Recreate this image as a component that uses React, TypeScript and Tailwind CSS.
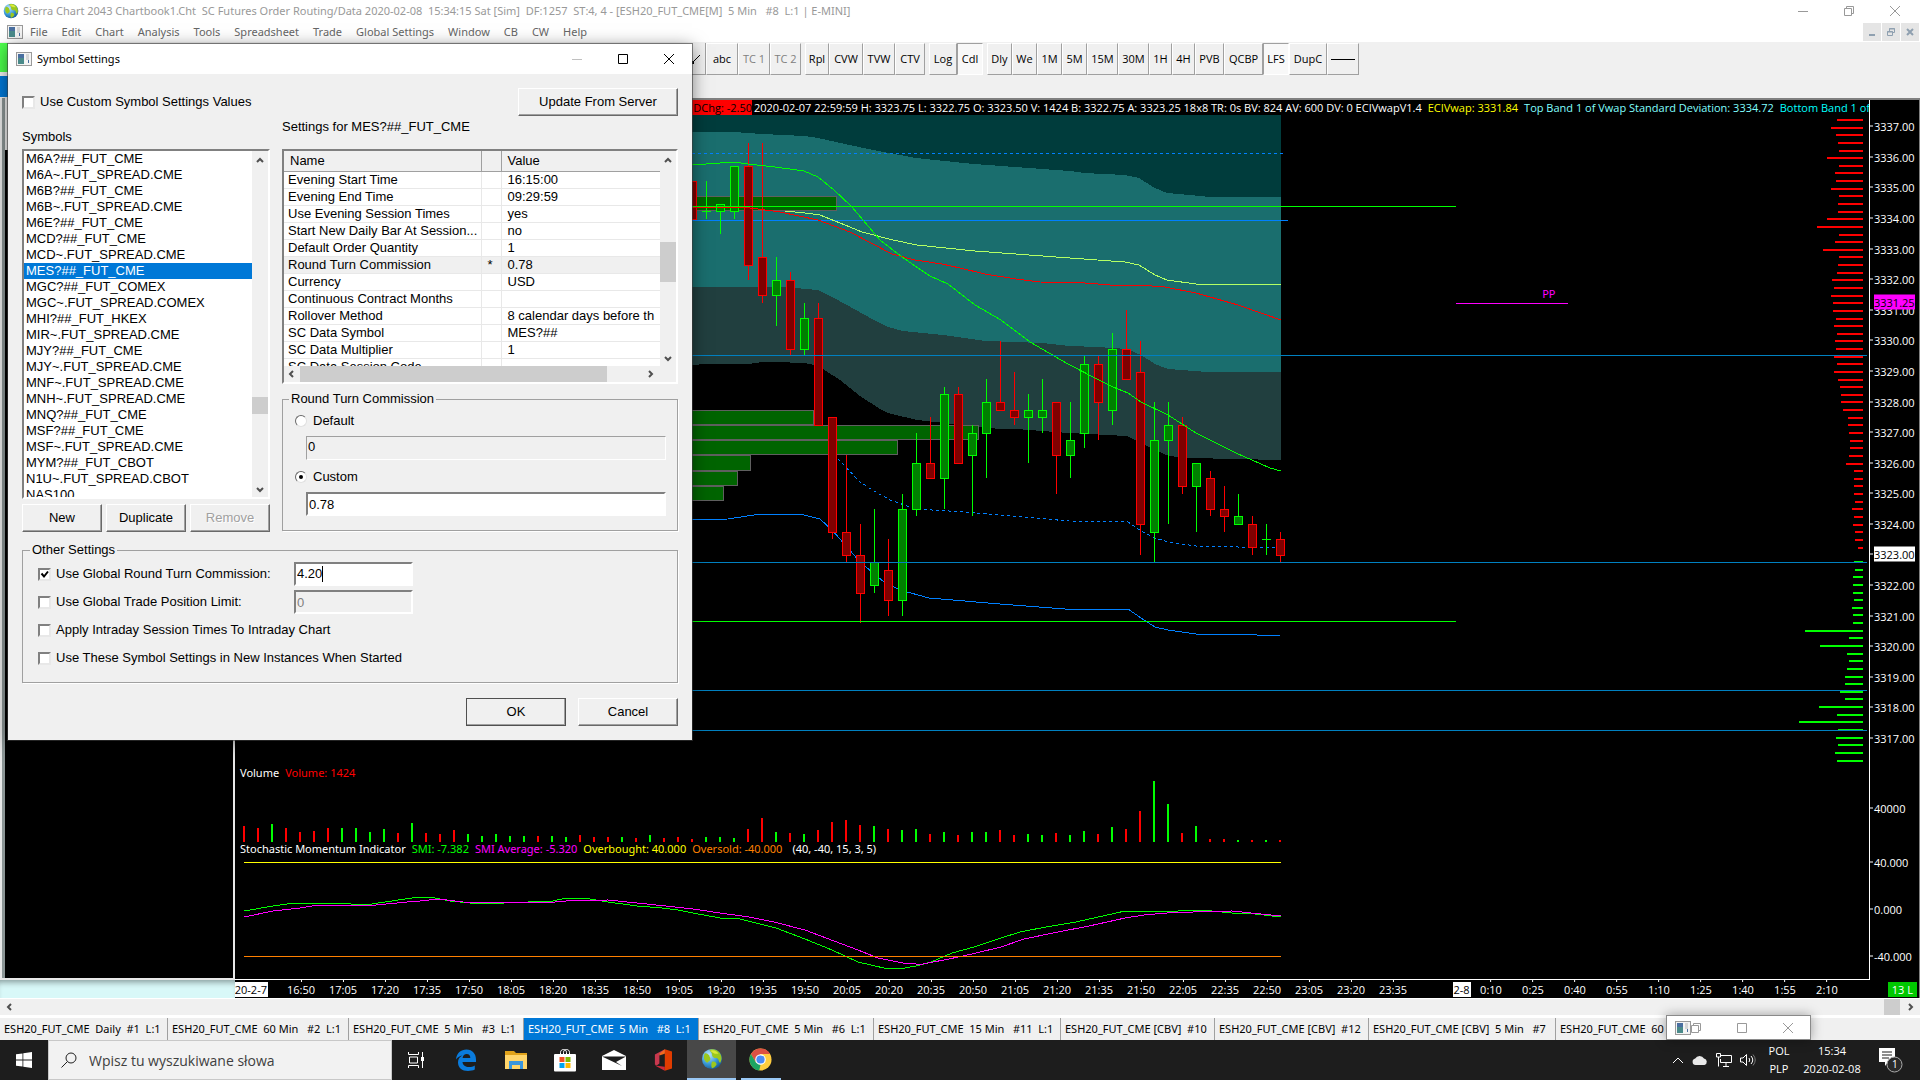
import React from "react";

const UI = "font-['Noto_Sans','Open_Sans',sans-serif]";
const NUM = "font-['Open_Sans','Noto_Sans',sans-serif]";
const DLG = "font-['Liberation_Sans',Arial,sans-serif]";

/* ---------- chart data ---------- */

// bar index, colour, wick top, body top, body bottom, wick bottom
type Candle = [number, "r" | "g", number, number, number, number];
const candles: Candle[] = [
  [32, "r", 181, 181, 219, 219],
  [33, "g", 181, 211, 212, 219],
  [34, "g", 204, 204, 211, 234],
  [35, "g", 166, 166, 211, 219],
  [36, "r", 143, 166, 265, 280],
  [37, "r", 143, 257, 295, 303],
  [38, "g", 257, 280, 295, 326],
  [39, "r", 272, 280, 349, 355],
  [40, "g", 303, 318, 349, 355],
  [41, "r", 303, 318, 425, 425],
  [42, "r", 417, 417, 532, 539],
  [43, "r", 455, 532, 555, 562],
  [44, "r", 524, 555, 593, 623],
  [45, "g", 509, 562, 585, 593],
  [46, "r", 539, 570, 600, 616],
  [47, "g", 494, 509, 600, 616],
  [48, "g", 433, 463, 509, 516],
  [49, "r", 417, 463, 478, 478],
  [50, "g", 387, 394, 478, 509],
  [51, "r", 387, 394, 463, 463],
  [52, "g", 425, 433, 455, 516],
  [53, "g", 379, 402, 433, 478],
  [54, "r", 341, 402, 410, 410],
  [55, "r", 372, 410, 417, 425],
  [56, "g", 394, 410, 417, 463],
  [57, "g", 379, 410, 417, 433],
  [58, "r", 402, 402, 455, 494],
  [59, "g", 402, 440, 455, 478],
  [60, "g", 356, 364, 433, 448],
  [61, "r", 356, 364, 402, 440],
  [62, "g", 333, 349, 410, 425],
  [63, "r", 310, 349, 379, 379],
  [64, "r", 341, 372, 524, 555],
  [65, "g", 402, 440, 532, 562],
  [66, "g", 402, 425, 440, 524],
  [67, "r", 417, 425, 486, 494],
  [68, "g", 463, 463, 486, 532],
  [69, "r", 471, 478, 509, 516],
  [70, "r", 486, 509, 516, 532],
  [71, "g", 494, 516, 524, 524],
  [72, "r", 516, 524, 547, 555],
  [73, "g", 524, 539, 540, 555],
  [74, "r", 532, 539, 555, 562],
];

const volumes =
  "16R 14R 18G 14R 10R 11R 14R 14G 14G 10G 13G 9R 19G 9R 8R 12R 8G 6G 8G 6G 6G 6R 6G 5G 7R 5R 5R 5G 4R 7G 4R 5R 3R 5G 5G 4G 13R 24R 10G 9R 8G 12R 20R 22R 17R 16G 13R 12G 13G 8R 10G 7R 10G 10G 12R 7R 8G 7G 9R 7G 11G 8R 15G 13R 31R 61G 38G 9R 16G 3R 3R 2G 2R 2G 2R".split(
    " "
  );

const asks = [
  26, 32, 27, 25, 24, 36, 24, 28, 27, 32, 24, 25, 25, 36, 46, 24, 28, 40, 24, 25, 26, 31, 29, 32, 30, 30, 27, 29, 26,
  28, 27, 29, 26, 29, 25, 23, 22, 22, 20, 15, 15, 14, 13, 13, 14, 17, 9, 9, 9, 9, 8, 11, 9, 10, 8, 8, 5,
];
const bids = [
  9, 8, 10, 10, 10, 9, 11, 10, 10, 58, 14, 43, 16, 14, 16, 18, 18, 23, 18, 44, 26, 64, 25, 27, 25, 28, 26,
];

const priceY = (p: number) => 126.3 + (3337 - p) * 30.54;
const barX = (k: number) => 244 + 14 * k;

const profile: [number, number, number][] = [
  [196, 211, 836],
  [410, 425, 813],
  [425, 440, 978],
  [440, 455, 897],
  [455, 471, 750],
  [471, 486, 737],
  [486, 501, 723],
];

const bandTop =
  "692,132 734,132 762,134 804,136 818,138 845,144 873,150 900,155 916,158 974,164 1070,171 1084,173 1125,175 1139,178 1153,187 1167,193 1190,195 1210,197 1281,197";
const bandMid =
  "692,287 748,287 776,287 795,288 818,290 834,298 856,310 874,320 888,327 903,331 943,335 986,341 1042,343 1070,346 1097,347 1127,349 1141,355 1155,364 1168,369 1208,372 1281,372";
const bandLow =
  "692,365 706,364 748,364 762,362 775,362 804,363 815,365 823,369 840,380 860,396 880,409 888,413 917,420 945,423 978,427 1000,429 1016,429 1069,433 1127,436 1141,443 1155,450 1169,456 1190,458 1281,460";

const greenMA =
  "692,165 720,163 734,162 748,164 775,167 804,171 818,177 834,190 852,207 880,240 902,257 918,268 930,276 948,284 975,305 1001,320 1030,342 1068,364 1097,379 1113,387 1128,393 1141,402 1168,415 1196,433 1236,453 1270,468 1281,471";
const vwap =
  "785,211 805,213 820,215 845,225 862,232 893,240 917,245 975,251 1056,257 1125,262 1139,265 1155,275 1167,280 1196,284 1259,284 1281,285";
const redMA =
  "692,207 716,207 750,208 780,212 818,220 850,232 892,254 915,260 942,264 960,268 985,274 1016,279 1040,282 1085,283 1110,285 1139,285 1165,287 1196,293 1238,305 1281,320";
const blueSolid =
  "692,520 728,519 760,514 800,514 820,519 833,531 860,562 884,582 900,590 929,598 1000,604 1065,609 1128,609 1141,618 1155,627 1168,630 1196,634 1233,634 1280,636";
const blueDash =
  "838,459 860,482 874,491 890,500 916,509 965,512 1069,521 1128,522 1141,531 1155,538 1168,542 1196,546 1280,548";
const smi =
  "244,911 273,906 294,903 336,903 365,905 385,902 412,898 430,897 450,901 470,903 504,903 553,901 566,898 584,898 608,902 637,906 662,908 678,910 693,913 720,918 740,919 776,928 805,939 832,950 858,962 888,969 905,968 916,966 931,962 952,953 974,947 1001,938 1020,932 1046,927 1076,922 1125,911 1144,911 1154,912 1202,910 1232,913 1255,914 1281,917";
const smiAvg =
  "244,917 273,911 300,908 318,905 376,905 407,902 420,901 439,899 463,902 506,903 532,902 555,902 566,901 608,900 637,903 666,906 693,909 720,913 749,917 774,922 805,930 834,941 858,950 878,958 903,963 916,964 923,964 949,959 972,954 1001,947 1024,939 1053,933 1089,926 1125,918 1144,915 1167,913 1193,912 1232,911 1261,914 1281,916";

const timeLabels: [string, number][] = [
  ...[
    "16:50", "17:05", "17:20", "17:35", "17:50", "18:05", "18:20", "18:35", "18:50", "19:05", "19:20", "19:35",
    "19:50", "20:05", "20:20", "20:35", "20:50", "21:05", "21:20", "21:35", "21:50", "22:05", "22:35", "22:50",
    "23:05", "23:20", "23:35",
  ].map((t, i): [string, number] => [t, 301 + i * 42]),
  ...["0:10", "0:25", "0:40", "0:55", "1:10", "1:25", "1:40", "1:55", "2:10"].map(
    (t, i): [string, number] => [t, 1491 + i * 42]
  ),
];

const axisLabels: [string, number][] = [
  ...Array.from({ length: 21 }, (_, i): [string, number] => [`${3337 - i}.00`, priceY(3337 - i)]),
  ["40000", 807],
  ["40.000", 861],
  ["0.000", 908],
  ["-40.000", 955],
];

/* ---------- chart ---------- */

function Plot() {
  return (
    <svg
      className="absolute inset-0 h-full w-full"
      viewBox="235 100 1634 879"
      preserveAspectRatio="none"
      shapeRendering="crispEdges"
      fill="none"
    >
      <rect x="235" y="115" width="1046" height="100" fill="#003c3c" />
      <polygon points={`${bandTop} 1281,380 692,380`} fill="#1a6e6e" />
      <polygon points={`${bandMid} 1281,480 692,480`} fill="#213f3f" />
      <polygon points={`${bandLow} 1281,520 692,520`} fill="#000" />
      {profile.map(([y1, y2, x]) => (
        <rect key={y1} x="600.5" y={y1 + 0.5} width={x - 600} height={y2 - y1 - 1} fill="#006400" stroke="#5f5f5f" />
      ))}
      <path d="M692 153.5H1285" stroke="#0080ff" strokeDasharray="3 3" />
      <path d="M692 220.5H1288" stroke="#0080ff" />
      <polyline points={blueDash} stroke="#0080ff" strokeDasharray="3 3" />
      <polyline points={blueSolid} stroke="#0080ff" />
      {candles.map(([k, c, wt, bt, bb, wb]) => {
        const x = barX(k);
        const line = c === "r" ? "#ff0000" : "#00ff00";
        const fill = c === "r" ? "#800000" : "#008000";
        return (
          <g key={k}>
            <rect x={x} y={wt} width="1" height={wb - wt} fill={line} />
            {bb - bt <= 1 ? (
              <rect x={x - 4} y={bt} width="9" height="1" fill={line} />
            ) : (
              <rect x={x - 3.5} y={bt + 0.5} width="8" height={bb - bt} fill={fill} stroke={line} />
            )}
          </g>
        );
      })}
      <polyline points={vwap} stroke="#b4ff64" />
      <polyline points={redMA} stroke="#ff0000" />
      <polyline points={greenMA} stroke="#00ff00" />
      {asks.map((w, i) => (
        <rect key={i} x={1863 - w} y={Math.round(119 + i * 7.635)} width={w} height="2" fill="#ff0000" />
      ))}
      {bids.map((w, i) => (
        <rect key={i} x={1863 - w} y={Math.round(561 + i * 7.635)} width={w} height="2" fill="#00ff00" />
      ))}
      {[355, 562, 690, 730].map((y) => (
        <rect key={y} x="235" y={y} width="1632" height="1" fill="#0080c0" />
      ))}
      {[206, 621].map((y) => (
        <rect key={y} x="235" y={y} width="1221" height="1" fill="#00ff00" />
      ))}
      <rect x="1456" y="303" width="112" height="1" fill="#ff00ff" />
      {volumes.map((v, k) => {
        const h = parseInt(v, 10);
        return (
          <rect
            key={k}
            x={barX(k) - 1}
            y={842 - h}
            width="2"
            height={h}
            fill={v.endsWith("R") ? "#ff0000" : "#00ff00"}
          />
        );
      })}
      <rect x="244" y="862" width="1037" height="1" fill="#ffff00" />
      <polyline points={smi} stroke="#00ff00" />
      <polyline points={smiAvg} stroke="#ff00ff" />
      <rect x="244" y="956" width="1037" height="1" fill="#ff8000" />
    </svg>
  );
}

function ChartWindow() {
  return (
    <section className={`flex min-w-0 flex-1 flex-col border-t-2 border-r border-[#808080] bg-black text-[11px] leading-[15px] text-white ${UI}`}>
      <div className="flex flex-1">
        <div className="relative flex-1 overflow-hidden border-r border-b border-white">
          <Plot />
          <div className={`absolute top-0 right-0 left-0 flex overflow-hidden whitespace-pre ${NUM}`}>
            <div className="w-[517px] shrink-0 bg-[#ff0000] text-right text-black">DChg: -2.50</div>
            <span className="pl-0.5">
              2020-02-07 22:59:59 H: 3323.75 L: 3322.75 O: 3323.50 V: 1424 B: 3322.75 A: 3323.25 18x8 TR: 0s BV: 824 AV: 600
              DV: 0 ECIVwapV1.4
            </span>
            <span className="pl-1.5 text-[#ffff00]">ECIVwap: 3331.84</span>
            <span className="pl-1.5 text-[#80ffff]">Top Band 1 of Vwap Standard Deviation: 3334.72</span>
            <span className="pl-1.5 text-[#00ffff]">Bottom Band 1 of</span>
          </div>
          <span className="absolute top-[21.2%] left-[80%] text-[#ff00ff]">PP</span>
          <div className="absolute top-[75.7%] left-[5px] flex gap-1.5">
            <span>Volume</span>
            <span className="text-[#ff0000]">Volume: 1424</span>
          </div>
          <div className="absolute top-[84.3%] left-[5px] flex gap-1.5">
            <span>Stochastic Momentum Indicator</span>
            <span className="text-[#00ff00]">SMI: -7.382</span>
            <span className="text-[#ff00ff]">SMI Average: -5.320</span>
            <span className="text-[#ffff00]">Overbought: 40.000</span>
            <span className="text-[#ff8000]">Oversold: -40.000</span>
            <span className="pl-1">(40, -40, 15, 3, 5)</span>
          </div>
        </div>
        <div className={`relative w-[49px] ${NUM}`}>
          {axisLabels.map(([t, y]) => (
            <div
              key={t}
              className="absolute left-0 flex -translate-y-1/2 items-center gap-px"
              style={{ top: `${((y - 100) / 879) * 100}%` }}
            >
              <span className="h-px w-[3px] bg-white" />
              <span className={t === "3323.00" ? "bg-white text-black" : ""}>{t}</span>
            </div>
          ))}
          <span className="absolute top-[23%] left-1 -translate-y-1/2 bg-[#ff00ff] text-black">3331.25</span>
        </div>
      </div>
      <div className={`relative h-[18px] overflow-hidden ${NUM}`}>
        <span className="absolute top-0.5 left-0 flex w-[33px] justify-end overflow-hidden bg-white pr-px whitespace-nowrap text-black">
          20-2-7
        </span>
        {timeLabels.map(([t, x]) => (
          <div
            key={t}
            className="absolute top-0 flex -translate-x-1/2 flex-col items-center"
            style={{ left: `${((x - 235) / 1684) * 100}%` }}
          >
            <span className="h-[2px] w-px bg-white" />
            <span>{t}</span>
          </div>
        ))}
        <span className="absolute top-0.5 left-[72.3%] bg-white px-px text-black">2-8</span>
        <span className="absolute top-0.5 right-0.5 bg-[#00c800] px-1">13 L</span>
      </div>
    </section>
  );
}

/* ---------- main window chrome ---------- */

function AppIcon() {
  return (
    <svg viewBox="0 0 16 16" className="h-4 w-4 shrink-0">
      <rect x="0.5" y="1.5" width="15" height="13" fill="#f4f4f4" stroke="#9a9a9a" />
      <rect x="2" y="3" width="6" height="10" fill="#4a8a8a" />
      <rect x="2" y="3" width="6" height="4" fill="#4a6fa0" />
      <path d="M10 4h3M10 6h3M10 8h3" stroke="#b8b8b8" />
      <rect x="12" y="9" width="1" height="3" fill="#4a6fa0" />
    </svg>
  );
}

function Globe({ className }: { className: string }) {
  return (
    <svg viewBox="0 0 24 24" className={className}>
      <defs>
        <radialGradient id="globe" cx="0.35" cy="0.3" r="0.8">
          <stop offset="0" stopColor="#bfe6ff" />
          <stop offset="0.55" stopColor="#3a9bd8" />
          <stop offset="1" stopColor="#12508a" />
        </radialGradient>
      </defs>
      <circle cx="12" cy="12" r="11" fill="url(#globe)" />
      <path d="M9 2c3-1 8-1 11 3 3 4 3 8 1 11-2 0-1-4-4-5-3 0-5-1-5-4 0-2-2-3-3-5zM4 6c2-1 4 1 5 2 0 2 2 3 1 5-1 2-2 1-3 3C4 15 2 11 4 6zM12 15c3-1 5 1 5 3-1 2-3 4-5 4-1-2-1-5 0-7z" fill="#9bc81e" />
      <path d="M10 3c4-2 8 1 9 3-3 1-6 0-9-3z" fill="#d8e83c" />
    </svg>
  );
}

const menus = ["File", "Edit", "Chart", "Analysis", "Tools", "Spreadsheet", "Trade", "Global Settings", "Window", "CB", "CW", "Help"];

function Header() {
  return (
    <header className={`bg-white ${UI}`}>
      <div className="flex h-[22px] items-center pl-[3px]">
        <Globe className="h-4 w-4" />
        <h1 className="pl-1 text-[11px] whitespace-pre text-[#999]">
          {"Sierra Chart 2043 Chartbook1.Cht  SC Futures Order Routing/Data 2020-02-08  15:34:15 Sat [Sim]  DF:1257  ST:4, 4 - [ESH20_FUT_CME[M]  5 Min   #8  L:1 | E-MINI]"}
        </h1>
        <div className="ml-auto flex gap-9 pr-5">
          <button aria-label="Minimise">
            <svg className="h-[10px] w-[10px]" viewBox="0 0 10 10"><path d="M0 5.5h10" stroke="#999" /></svg>
          </button>
          <button aria-label="Restore">
            <svg className="h-[10px] w-[10px]" viewBox="0 0 10 10" fill="none" stroke="#999"><path d="M.5 2.500h7v7h-7zM2.500 2.500v-2h7v7h-2" /></svg>
          </button>
          <button aria-label="Close">
            <svg className="h-[10px] w-[10px]" viewBox="0 0 10 10"><path d="M0 0l10 10M10 0L0 10" stroke="#999" /></svg>
          </button>
        </div>
      </div>
      <nav className="flex h-5 items-center pl-[7px]">
        <AppIcon />
        <div className="flex gap-3.5 pl-[7px] text-[11px] text-[#666]">
          {menus.map((m) => (
            <button key={m} className="whitespace-nowrap">{m}</button>
          ))}
        </div>
        <div className="ml-auto flex gap-px pr-px text-[#8fa0b0]">
          <button aria-label="Minimise chart" className="flex h-[18px] w-[18px] items-center justify-center bg-[#e5e5e5]">
            <svg className="h-2.5 w-2.5" viewBox="0 0 10 10"><path d="M2 7h6v2H2z" fill="currentColor" /></svg>
          </button>
          <button aria-label="Restore chart" className="flex h-[18px] w-[18px] items-center justify-center bg-[#e5e5e5]">
            <svg className="h-2.5 w-2.5" viewBox="0 0 10 10" fill="none" stroke="currentColor"><path d="M1.500 4.500h5v4h-5zM1 5h6M3.500 4V1.500h5v4H7M3 2h6" /></svg>
          </button>
          <button aria-label="Close chart" className="flex h-[18px] w-[18px] items-center justify-center bg-[#e5e5e5]">
            <svg className="h-2.5 w-2.5" viewBox="0 0 10 10"><path d="M2 2l6 6M8 2L2 8" stroke="currentColor" strokeWidth="2" /></svg>
          </button>
        </div>
      </nav>
    </header>
  );
}

type Tool = { t: string; c: string };
const toolGroups: Tool[][] = [
  [{ t: "abc", c: "w-8" }, { t: "TC 1", c: "w-8 text-[#808080]" }, { t: "TC 2", c: "w-[31px] text-[#808080]" }],
  [{ t: "Rpl", c: "w-6" }, { t: "CVW", c: "w-[34px]" }, { t: "TVW", c: "w-8" }, { t: "CTV", c: "w-[30px]" }],
  [{ t: "Log", c: "w-7" }, { t: "Cdl", c: "w-[26px]" }],
  [
    { t: "Dly", c: "w-[25px]" },
    { t: "We", c: "w-[25px]" },
    { t: "1M", c: "w-[25px]" },
    { t: "5M", c: "w-[25px]" },
    { t: "15M", c: "w-[31px]" },
    { t: "30M", c: "w-[31px]" },
    { t: "1H", c: "w-[23px]" },
    { t: "4H", c: "w-[23px]" },
    { t: "PVB", c: "w-[29px]" },
    { t: "QCBP", c: "w-[39px]" },
    { t: "LFS", c: "w-[26px]" },
    { t: "DupC", c: "w-[38px]" },
    { t: "line", c: "w-8" },
  ],
];

function Toolbar() {
  return (
    <div className={`flex h-[56px] items-start bg-[#f0f0f0] pt-px text-[11px] ${NUM}`}>
      <div className="flex w-2 flex-col gap-1">
        <div className="h-[29px] bg-[#4cff4c]" />
        <div className="h-[21px] bg-[#0078d7]" />
      </div>
      <div className="flex gap-1 pl-[671px]">
        <button aria-label="Draw line" className="-mr-1 flex h-8 w-[27px] items-center justify-end border-r border-b border-[#a0a0a0] pr-1">
          <svg viewBox="0 0 10 10" className="h-2.5 w-2.5"><path d="M1 9L9 1" stroke="#000" /><rect y="7" width="3" height="3" fill="#000" /></svg>
        </button>
        {toolGroups.map((g, i) => (
          <div key={i} className="flex">
            {g.map(({ t, c }) => (
              <button
                key={t}
                className={`flex h-8 items-center justify-center overflow-hidden border whitespace-nowrap ${c} ${
                  t === "Cdl" || t === "LFS"
                    ? "border-t-[#a0a0a0] border-r-white border-b-white border-l-[#a0a0a0] bg-[#f8f8f8]"
                    : "border-t-white border-r-[#a0a0a0] border-b-[#a0a0a0] border-l-white"
                }`}
                aria-label={t}
              >
                {t === "line" ? <span className="h-px w-6 bg-black" /> : t}
              </button>
            ))}
          </div>
        ))}
      </div>
    </div>
  );
}

const tabs = [
  ["ESH20_FUT_CME  Daily  #1  L:1", "w-[168px]"],
  ["ESH20_FUT_CME  60 Min   #2  L:1", "w-[181px]"],
  ["ESH20_FUT_CME  5 Min   #3  L:1", "w-[175px]"],
  ["ESH20_FUT_CME  5 Min   #8  L:1", "w-[175px]"],
  ["ESH20_FUT_CME  5 Min   #6  L:1", "w-[175px]"],
  ["ESH20_FUT_CME  15 Min   #11  L:1", "w-[187px]"],
  ["ESH20_FUT_CME [CBV]  #10", "w-[154px]"],
  ["ESH20_FUT_CME [CBV]  #12", "w-[154px]"],
  ["ESH20_FUT_CME [CBV]  5 Min   #7", "w-[187px]"],
  ["ESH20_FUT_CME  60", "w-[170px]"],
];

function Tabs() {
  return (
    <div className={`relative flex h-[24px] overflow-visible border-t-2 border-white bg-[#f0f0f0] ${UI}`}>
      <div className="flex flex-1 overflow-hidden">
        {tabs.map(([t, w]) => (
          <button
            key={t}
            className={`shrink-0 overflow-hidden border-r border-[#a0a0a0] pl-1 text-left text-[11px] leading-5 whitespace-pre ${w} ${
              t.includes("#8") ? "bg-[#0078d7] text-white" : ""
            }`}
          >
            {t}
          </button>
        ))}
      </div>
      <div className="absolute right-[109px] bottom-0 flex h-[25px] w-[145px] items-center border border-[#8a8a8a] bg-white pl-2 shadow-[0_0_12px_rgba(0,0,0,0.35)]">
        <AppIcon />
        <div className="flex flex-1 justify-between pr-[17px]">
          <button aria-label="Restore small window">
            <svg className="h-2.5 w-2.5" viewBox="0 0 10 10" fill="none" stroke="#999"><path d="M.5 2.500h7v7h-7zM2.500 2.500v-2h7v7h-2" /></svg>
          </button>
          <button aria-label="Maximise small window">
            <svg className="h-2.5 w-2.5" viewBox="0 0 10 10" fill="none" stroke="#999"><path d="M.5.5h9v9h-9z" /></svg>
          </button>
          <button aria-label="Close small window">
            <svg className="h-2.5 w-2.5" viewBox="0 0 10 10"><path d="M0 0l10 10M10 0L0 10" stroke="#999" /></svg>
          </button>
        </div>
      </div>
    </div>
  );
}

/* ---------- dialog ---------- */

const symbols = [
  "M6A?##_FUT_CME", "M6A~.FUT_SPREAD.CME", "M6B?##_FUT_CME", "M6B~.FUT_SPREAD.CME", "M6E?##_FUT_CME",
  "MCD?##_FUT_CME", "MCD~.FUT_SPREAD.CME", "MES?##_FUT_CME", "MGC?##_FUT_COMEX", "MGC~.FUT_SPREAD.COMEX",
  "MHI?##_FUT_HKEX", "MIR~.FUT_SPREAD.CME", "MJY?##_FUT_CME", "MJY~.FUT_SPREAD.CME", "MNF~.FUT_SPREAD.CME",
  "MNH~.FUT_SPREAD.CME", "MNQ?##_FUT_CME", "MSF?##_FUT_CME", "MSF~.FUT_SPREAD.CME", "MYM?##_FUT_CBOT",
  "N1U~.FUT_SPREAD.CBOT", "NAS100",
];

const rows: [string, string, string][] = [
  ["Evening Start Time", "", "16:15:00"],
  ["Evening End Time", "", "09:29:59"],
  ["Use Evening Session Times", "", "yes"],
  ["Start New Daily Bar At Session...", "", "no"],
  ["Default Order Quantity", "", "1"],
  ["Round Turn Commission", "*", "0.78"],
  ["Currency", "", "USD"],
  ["Continuous Contract Months", "", ""],
  ["Rollover Method", "", "8 calendar days before th"],
  ["SC Data Symbol", "", "MES?##"],
  ["SC Data Multiplier", "", "1"],
  ["SC Data Session Code", "", ""],
];

function Arrow({ d }: { d: "up" | "down" | "left" | "right" }) {
  const p = { up: "M1 6l3-3 3 3", down: "M1 2l3 3 3-3", left: "M5 1L2 4l3 3", right: "M3 1l3 3-3 3" }[d];
  return (
    <svg viewBox="0 0 8 8" className="h-2 w-2" fill="none" stroke="#505050" strokeWidth="2">
      <path d={p} />
    </svg>
  );
}

function VScroll({ thumb, gap }: { thumb: string; gap: string }) {
  return (
    <div className="flex w-4 shrink-0 flex-col items-center bg-[#f0f0f0] pt-[5px] pb-[3px]">
      <Arrow d="up" />
      <div className={`w-full bg-[#cdcdcd] ${thumb} ${gap}`} />
      <div className="flex-1" />
      <Arrow d="down" />
    </div>
  );
}

const sunken = "border-2 border-t-[#808080] border-l-[#808080] border-r-white border-b-white";

function Btn({ children, className, disabled }: { children: string; className: string; disabled?: boolean }) {
  return (
    <button
      disabled={disabled}
      className={`h-7 border border-t-white border-r-[#696969] border-b-[#696969] border-l-white bg-[#f0f0f0] shadow-[inset_-1px_-1px_0_#a0a0a0] disabled:text-[#a0a0a0] disabled:[text-shadow:1px_1px_0_#fff] ${className}`}
    >
      {children}
    </button>
  );
}

function Check({ id, label, checked }: { id: string; label: string; checked?: boolean }) {
  return (
    <div className="flex items-center gap-[5px]">
      <span className="relative flex">
        <input
          id={id}
          type="checkbox"
          defaultChecked={checked}
          className="peer h-[13px] w-[13px] appearance-none border-2 border-t-[#808080] border-r-[#e8e8e8] border-b-[#e8e8e8] border-l-[#808080] bg-white"
        />
        <svg viewBox="0 0 13 13" className="pointer-events-none absolute inset-0 hidden peer-checked:block">
          <path d="M3.500 5.500l2.500 3 4-5" fill="none" stroke="#000" strokeWidth="2" />
        </svg>
      </span>
      <label htmlFor={id}>{label}</label>
    </div>
  );
}

function Radio({ id, label, checked }: { id: string; label: string; checked?: boolean }) {
  return (
    <div className="flex h-4 items-center gap-1.5">
      <span className="relative flex">
        <input
          id={id}
          name="commission"
          type="radio"
          defaultChecked={checked}
          className="peer h-3 w-3 appearance-none rounded-full border border-t-[#696969] border-r-[#e0e0e0] border-b-[#e0e0e0] border-l-[#696969] bg-white"
        />
        <span className="pointer-events-none absolute top-1 left-1 hidden h-1 w-1 rounded-full bg-black peer-checked:block" />
      </span>
      <label htmlFor={id}>{label}</label>
    </div>
  );
}

function Dialog() {
  return (
    <div
      role="dialog"
      aria-label="Symbol Settings"
      className={`absolute top-[44px] left-2 flex w-[684px] flex-col bg-[#f0f0f0] text-[13px] leading-4 text-black shadow-[0_0_0_1px_rgba(60,60,60,0.6),0_3px_16px_rgba(0,0,0,0.5)] ${DLG}`}
    >
      <div className={`flex h-[30px] items-center bg-white pl-2 text-[11px] ${UI}`}>
        <AppIcon />
        <h2 className="pl-[5px]">Symbol Settings</h2>
        <div className="ml-auto flex gap-9 pr-[18px]">
          <button aria-label="Minimise dialog" disabled>
            <svg className="h-2.5 w-2.5" viewBox="0 0 10 10"><path d="M0 5.5h10" stroke="#c0c0c0" /></svg>
          </button>
          <button aria-label="Maximise dialog">
            <svg className="h-2.5 w-2.5" viewBox="0 0 10 10" fill="none" stroke="#000"><path d="M.5.5h9v9h-9z" /></svg>
          </button>
          <button aria-label="Close dialog">
            <svg className="h-2.5 w-2.5" viewBox="0 0 10 10"><path d="M0 0l10 10M10 0L0 10" stroke="#000" /></svg>
          </button>
        </div>
      </div>

      <div className="flex flex-col px-3.5 pt-3.5 pb-3.5">
        <div className="flex items-center justify-between">
          <Check id="custom-values" label="Use Custom Symbol Settings Values" />
          <Btn className="w-40">Update From Server</Btn>
        </div>

        <div className="flex gap-3">
          <div className="flex w-[248px] flex-col pt-[13px]">
            <span id="symbols-label" className="pb-1">Symbols</span>
            <div className={`flex h-[350px] bg-white ${sunken}`}>
              <ul role="listbox" aria-labelledby="symbols-label" className="flex-1 overflow-hidden">
                {symbols.map((s) => (
                  <li
                    key={s}
                    role="option"
                    aria-selected={s.startsWith("MES")}
                    className={`pl-0.5 ${s.startsWith("MES") ? "bg-[#0078d7] text-white" : ""}`}
                  >
                    {s}
                  </li>
                ))}
              </ul>
              <VScroll thumb="h-[17px]" gap="mt-[233px]" />
            </div>
            <div className="flex gap-1 pt-[5px]">
              <Btn className="flex-1">New</Btn>
              <Btn className="flex-1">Duplicate</Btn>
              <Btn className="flex-1" disabled>Remove</Btn>
            </div>
          </div>

          <div className="flex min-w-0 flex-1 flex-col pt-[3px]">
            <span className="pb-3.5">Settings for MES?##_FUT_CME</span>
            <div className={`flex h-[235px] flex-col bg-white ${sunken}`}>
              <div className="flex min-h-0 flex-1">
                <div className="min-w-0 flex-1 overflow-hidden">
                  <table className="w-full table-fixed border-collapse">
                    <colgroup>
                      <col className="w-[197px]" />
                      <col className="w-5" />
                      <col />
                    </colgroup>
                    <thead>
                      <tr className="h-[20px] bg-[#f0f0f0] text-left">
                        <th className="border-r border-b border-[#a0a0a0] pl-1.5 font-normal">Name</th>
                        <th className="border-r border-b border-[#a0a0a0]" aria-label="Changed" />
                        <th className="border-b border-[#a0a0a0] pl-1.5 font-normal">Value</th>
                      </tr>
                    </thead>
                    <tbody>
                      {rows.map(([n, m, v]) => (
                        <tr key={n} className={`h-[17px] ${m ? "bg-[#f0f0f0]" : ""}`}>
                          <td className="border-r border-b border-[#e8e8e8] pl-1 whitespace-nowrap">{n}</td>
                          <td className="border-r border-b border-[#e8e8e8] pl-1.5">{m}</td>
                          <td className="border-b border-[#e8e8e8] pl-1.5 whitespace-nowrap">{v}</td>
                        </tr>
                      ))}
                    </tbody>
                  </table>
                </div>
                <VScroll thumb="h-10" gap="mt-[78px]" />
              </div>
              <div className="flex h-4 items-center gap-1 bg-[#f0f0f0] pr-[18px] pl-1">
                <Arrow d="left" />
                <div className="h-full w-[307px] bg-[#cdcdcd]" />
                <div className="ml-auto pr-1"><Arrow d="right" /></div>
              </div>
            </div>

            <fieldset className="mt-[7px] flex h-[140px] flex-col border border-[#a0a0a0] px-3 shadow-[1px_1px_0_#fff]">
              <legend className="-ml-1.5 px-0.5">Round Turn Commission</legend>
              <div className="flex flex-col pt-1.5">
                <Radio id="default" label="Default" />
                <input aria-label="Default commission" readOnly defaultValue="0" className="mt-[7px] mr-[-1px] ml-[11px] h-6 border border-t-[#a0a0a0] border-r-white border-b-white border-l-[#a0a0a0] bg-[#f0f0f0] px-px pb-1" />
                <div className="pt-[9px]"><Radio id="custom" label="Custom" checked /></div>
                <input aria-label="Custom commission" defaultValue="0.78" className={`mt-[7px] mr-[-1px] ml-[11px] h-6 bg-white px-px ${sunken}`} />
              </div>
            </fieldset>
          </div>
        </div>

        <fieldset className="mt-[10px] flex h-[141px] flex-col border border-[#a0a0a0] pl-[15px] shadow-[1px_1px_0_#fff]">
          <legend className="-ml-2 px-0.5">Other Settings</legend>
          <div className="flex h-7 items-center pt-1">
            <div className="w-[256px]"><Check id="g1" label="Use Global Round Turn Commission:" checked /></div>
            <div className={`flex h-6 w-[119px] items-center bg-white px-px ${sunken}`}>
              <input aria-label="Global commission" defaultValue="4.20" className="w-[26px] border-r border-black p-0" />
            </div>
          </div>
          <div className="flex h-7 items-center pt-1">
            <div className="w-[256px]"><Check id="g2" label="Use Global Trade Position Limit:" /></div>
            <input aria-label="Global position limit" disabled defaultValue="0" className={`h-6 w-[119px] bg-[#f0f0f0] px-px text-[#808080] ${sunken}`} />
          </div>
          <div className="flex h-7 items-center pt-1"><Check id="g3" label="Apply Intraday Session Times To Intraday Chart" /></div>
          <div className="flex h-7 items-center pt-1"><Check id="g4" label="Use These Symbol Settings in New Instances When Started" /></div>
        </fieldset>

        <div className="flex justify-end gap-3 pt-[15px]">
          <Btn className="w-[100px] outline outline-1 -outline-offset-1 outline-[#505050]">OK</Btn>
          <Btn className="w-[100px]">Cancel</Btn>
        </div>
      </div>
    </div>
  );
}

/* ---------- taskbar ---------- */

const cell = "flex h-10 w-[49px] items-center justify-center";

function Taskbar() {
  return (
    <footer className={`flex h-10 items-center bg-[#1d1d1d] text-white ${NUM}`}>
      <button aria-label="Start" className="flex h-10 w-12 items-center justify-center">
        <svg viewBox="0 0 16 16" className="h-4 w-4" fill="#fff"><path d="M0 2.300L6.500 1.400v6.200H0zM7.300 1.300L16 0v7.600H7.300zM0 8.400h6.500v6.200L0 13.700zM7.300 8.400H16V16l-8.700-1.300z" /></svg>
      </button>
      <label className="flex h-10 w-[344px] items-center gap-3 border border-[#c8c8c8] bg-[#f2f2f2] pl-3 text-[#404040]">
        <svg viewBox="0 0 16 16" className="h-4 w-4" fill="none" stroke="#202020"><circle cx="10" cy="6" r="5" /><path d="M6.300 9.700L.5 15.500" /></svg>
        <input aria-label="Search" placeholder="Wpisz tu wyszukiwane słowa" className="flex-1 text-[14px] placeholder:text-[#404040]" />
      </label>
      <button aria-label="Task view" className="flex h-10 w-12 items-center justify-center">
        <svg viewBox="0 0 16 16" className="h-4 w-4" fill="none" stroke="#fff"><path d="M.5 0v2.500h10V0M.5 16v-2.500h10V16M1.500 5h8v6h-8zM14.500 0v16" /><rect x="13.500" y="5.500" width="2" height="3" fill="#fff" /></svg>
      </button>
      <button aria-label="Edge" className="flex h-10 w-[51px] items-center justify-center">
        <svg viewBox="0 0 22 22" className="h-[22px] w-[22px]"><path d="M1 10.500C1.500 4 6 .5 11.500.5 17.500.5 21 5 21 10.500V13H7.500c.3 3.500 3 5 6.500 5 2.200 0 4.200-.6 5.800-1.600v4.200C18 21.600 15.500 22 13 22 7 22 3 18.500 3 13.500c0-3 1.500-5.700 4.300-7C4.500 7 2.500 8.500 1 10.500zM7.600 9h7.700c0-2.500-1.300-4-3.600-4-2.200 0-3.700 1.500-4.100 4z" fill="#0a7bdc" /></svg>
      </button>
      <button aria-label="Files" className={cell}>
        <svg viewBox="0 0 22 20" className="h-5 w-[22px]"><path d="M0 1h9l2 2h11v16H0z" fill="#e0a21a" /><path d="M0 5h22v14H0z" fill="#ffd56b" /><path d="M4 19v-8h14v8h-3v-4H7v4z" fill="#3a96dd" /></svg>
      </button>
      <button aria-label="Store" className={cell}>
        <svg viewBox="0 0 24 24" className="h-6 w-6"><path d="M7.500 7V4.500C7.500 2.500 9 1.500 10.500 1.500S13.500 2.500 13.500 4.500V6M10.500 6V4.500c0-2 1.300-3 3-3s3 1 3 3V7" fill="none" stroke="#fff" /><rect x="1" y="6" width="22" height="17.500" rx="1" fill="#fff" /><path d="M6.500 9h5v5h-5z" fill="#f25022" /><path d="M12.500 9h5v5h-5z" fill="#7fba00" /><path d="M6.500 15h5v5h-5z" fill="#00a4ef" /><path d="M12.500 15h5v5h-5z" fill="#ffb900" /></svg>
      </button>
      <button aria-label="Mail" className={cell}>
        <svg viewBox="0 0 24 20" className="h-5 w-6"><path d="M0 6l12-6 12 6v14H0z" fill="#fff" /><path d="M0 6.500h24l-10 5.500 6 4L0 6.500z" fill="#1d1d1d" /></svg>
      </button>
      <button aria-label="Office" className={cell}>
        <svg viewBox="0 0 20 24" className="h-[22px] w-[18px]"><path d="M12 0l8 2.500v19L12 24z" fill="#e03c00" /><path d="M1 6l11-6v4L6 6v10l-3 2-2-1z" fill="#c8384e" /><path d="M12 0v5L6 7V5z" fill="#f06a20" /><path d="M1 18l11 1.500V24z" fill="#d02a3a" /></svg>
      </button>
      <button aria-label="Sierra Chart" className={`${cell} border-b-2 border-[#9ac8f5] bg-[#484848]`}>
        <Globe className="h-[22px] w-[22px]" />
      </button>
      <button aria-label="Chrome" className={`${cell}`}>
        <span className="flex h-10 w-10 items-center justify-center border-b-2 border-[#9ac8f5]">
          <svg viewBox="0 0 24 24" className="h-[23px] w-[23px]">
            <circle cx="12" cy="12" r="11.500" fill="#ffcd40" />
            <path d="M12 6.300h10A11.500 11.500 0 0 0 2 6.300l5 8.500z" fill="#dd5144" />
            <path d="M2 6.300l5.100 8.600L12 17.500l-1.300 6A11.500 11.500 0 0 1 2 6.300z" fill="#1da462" />
            <circle cx="12" cy="12" r="5.500" fill="#fff" />
            <circle cx="12" cy="12" r="4.300" fill="#4c8bf5" />
          </svg>
        </span>
      </button>
      <div className="ml-auto flex items-center text-center text-[11px] leading-[18px]">
        <div className="flex items-center gap-2">
          <svg viewBox="0 0 12 8" className="h-2 w-3" fill="none" stroke="#fff"><path d="M1 7l5-5 5 5" /></svg>
          <svg viewBox="0 0 16 10" className="h-2.5 w-4" fill="#e8e8e8"><path d="M3.500 10a3.300 3.300 0 0 1-.3-6.500A5 5 0 0 1 12 3.600 3.300 3.300 0 0 1 12.500 10z" /></svg>
          <svg viewBox="0 0 16 14" className="h-3.5 w-4" fill="none" stroke="#fff"><path d="M5 2.500h10.500v7H4.500V6M.5.5h4V4h-4zM2.500 4v9.500M10 10v3M7 13.500h6" /></svg>
          <svg viewBox="0 0 16 14" className="h-3.5 w-4" fill="none" stroke="#fff"><path d="M.5 5H3l3.500-3.500v11L3 9H.5zM9 5q1.500 2 0 4M11 3q3.500 4 0 8" /><path d="M13 1.500q4.500 5.500 0 11" stroke="#777" /></svg>
        </div>
        <div className="w-[46px]">POL<br />PLP</div>
        <div className="w-[60px]">15:34<br />2020-02-08</div>
        <div className="relative flex w-[58px] justify-center">
          <svg viewBox="0 0 24 26" className="h-[26px] w-6"><path d="M0 1h16v14H9l-3 4v-4H0z" fill="#fff" /><path d="M3 5h10M3 8h10M3 11h7" stroke="#1d1d1d" /><circle cx="15.500" cy="17.500" r="7.500" fill="#2a2a2a" stroke="#aaa" /></svg>
          <span className="absolute top-2 left-[30px] text-[10px]">1</span>
        </div>
      </div>
    </footer>
  );
}

/* ---------- page ---------- */

export default function App() {
  return (
    <div className="relative flex min-h-screen flex-col overflow-hidden bg-[#f0f0f0] text-black">
      <Header />
      <Toolbar />
      <main className="flex flex-1">
        <section aria-label="Hidden chart" className="flex w-[235px] flex-col">
          <div className="flex flex-1 border-r-2 border-b-2 border-l-2 border-[#e8e8e8]">
            <div className="w-[3px] bg-[#8c9696]" />
            <div className="flex flex-1 flex-col bg-black">
              <div className="h-[52px] bg-[#f0f0f0]" />
            </div>
          </div>
          <div className="h-[18px] bg-[#d8f8f8] shadow-[inset_0_6px_6px_-4px_rgba(0,0,0,0.4)]" />
        </section>
        <ChartWindow />
      </main>
      <div className="flex h-[18px] items-center border-y border-white bg-[#f0f0f0] pl-1.5">
        <Arrow d="left" />
        <div className="ml-auto h-full w-4 bg-[#cdcdcd]" />
        <div className="px-1.5"><Arrow d="right" /></div>
      </div>
      <Tabs />
      <Taskbar />
      <Dialog />
    </div>
  );
}
